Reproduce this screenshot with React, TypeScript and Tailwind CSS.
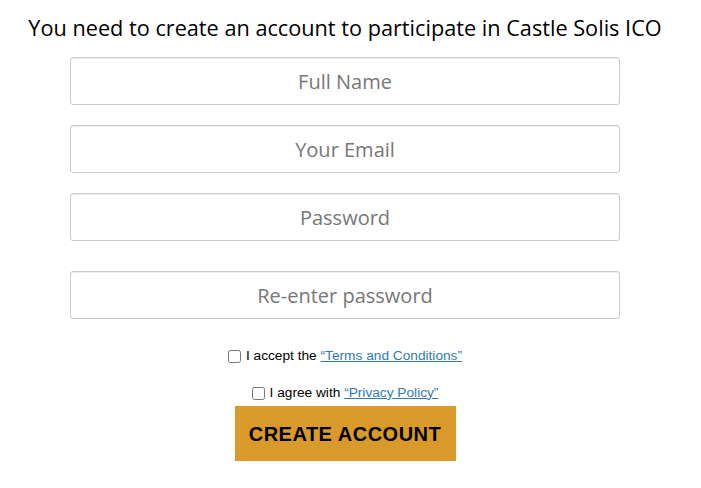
import React from "react";

const inputCls =
  "block w-full h-[48px] rounded-[3px] border border-[#cccccc] bg-white text-center text-[20px] text-[#555] placeholder:text-[#777] shadow-[inset_0_1px_1px_rgba(0,0,0,0.075)] outline-none";

export default function App() {
  return (
    <div className="w-[690px] bg-white" style={{ fontFamily: '"Open Sans", sans-serif' }}>
      <h1 className="pt-[13px] text-center text-[21.7px] font-medium leading-[30px] text-black">
        You need to create an account to participate in Castle Solis ICO
      </h1>
      <div className="mx-auto mt-[14px] w-[550px]">
        <input className={inputCls} placeholder="Full Name" />
        <input className={inputCls + " mt-[20px]"} placeholder="Your Email" />
        <input className={inputCls + " mt-[20px]"} type="password" placeholder="Password" />
        <input className={inputCls + " mt-[30px]"} type="password" placeholder="Re-enter password" />
      </div>
      <div
        className="mt-[29px] flex flex-col items-center text-[13.7px] text-black"
        style={{ fontFamily: '"Liberation Sans", Arial, sans-serif' }}
      >
        <label className="flex items-center gap-[5px] h-[16px]">
          <input type="checkbox" className="m-0 h-[13px] w-[13px]" />
          <span>
            I accept the{" "}
            <a href="#" className="text-[#337ab7] underline">
              “Terms and Conditions”
            </a>
          </span>
        </label>
        <label className="mt-[21px] flex items-center gap-[5px] h-[16px]">
          <input type="checkbox" className="m-0 h-[13px] w-[13px]" />
          <span>
            I agree with{" "}
            <a href="#" className="text-[#337ab7] underline">
              “Privacy Policy”
            </a>
          </span>
        </label>
        <button className="mt-[5px] h-[55px] w-[221px] bg-[#d9992b] text-[20px] font-bold uppercase text-black tracking-[0.5px]">
          Create Account
        </button>
      </div>
    </div>
  );
}
